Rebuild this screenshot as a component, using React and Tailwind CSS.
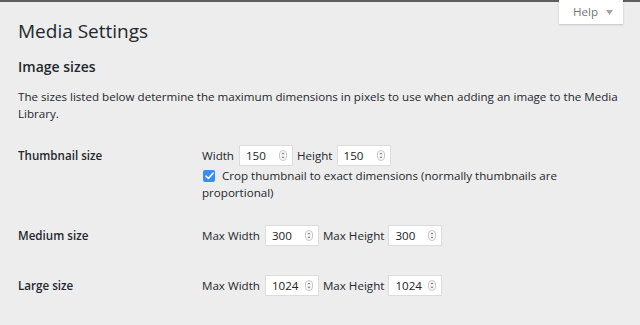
import React from "react";

function Spinner() {
  return (
    <svg width="8" height="11" viewBox="0 0 8 11" className="shrink-0">
      <rect x="0.5" y="0.5" width="7" height="10" rx="3.5" fill="#fafafa" stroke="#c8c8c8" />
      <path d="M2.4 4.3 L4 2.6 L5.6 4.3 Z" fill="#777" />
      <path d="M2.4 6.7 L4 8.4 L5.6 6.7 Z" fill="#777" />
    </svg>
  );
}

function NumInput({ value }) {
  return (
    <div className="w-[54px] h-[21px] bg-white border border-[#dcdcdc] flex items-center pl-[6px] pr-[5px] justify-between shrink-0">
      <span className="text-[11.6px] text-[#222]">{value}</span>
      <Spinner />
    </div>
  );
}

export default function App() {
  return (
    <div
      className="relative w-[640px] h-[325px] bg-[#ededed] overflow-hidden text-[#23282d]"
      style={{ fontFamily: '"Open Sans", "Noto Sans", sans-serif' }}
    >
      <div className="h-[2px] bg-[#5f5f5f]" />
      <div className="absolute top-0 left-[559px] w-[64px] h-[24px] bg-white shadow-[0_1px_2px_rgba(0,0,0,0.18)] flex items-center pl-[14px] gap-[8px]">
        <span className="text-[11.6px] text-[#72777c]">Help</span>
        <svg width="7" height="5" viewBox="0 0 7 5">
          <path d="M0 0 H7 L3.5 5 Z" fill="#a0a5aa" />
        </svg>
      </div>
      <div className="pl-[18px]">
        <h1 className="mt-[16px] text-[19px] leading-[26px] font-normal">Media Settings</h1>
        <h2 className="mt-[13px] text-[14px] leading-[20px] font-semibold">Image sizes</h2>
        <p className="mt-[11px] w-[618px] text-[11.6px] leading-[17px]">
          The sizes listed below determine the maximum dimensions in pixels to use when adding an image to the Media Library.
        </p>

        <div className="mt-[23px] flex">
          <div className="w-[184px] shrink-0 h-[21px] flex items-center text-[11.6px] font-semibold">Thumbnail size</div>
          <div className="flex-1 text-[11.6px]">
            <div className="flex items-center h-[21px]">
              <span className="mr-[5px]">Width</span>
              <NumInput value="150" />
              <span className="ml-[4px] mr-[4px]">Height</span>
              <NumInput value="150" />
            </div>
            <div className="mt-[1px] leading-[17px] relative pl-[20px]">
              <span className="absolute left-[1px] top-[3px] w-[12px] h-[12px] rounded-[2px] bg-[#3a8cf2] flex items-center justify-center">
                <svg width="9" height="8" viewBox="0 0 9 8">
                  <path d="M1 4.2 L3.4 6.5 L8 1.2" fill="none" stroke="white" strokeWidth="1.6" strokeLinecap="round" strokeLinejoin="round" />
                </svg>
              </span>
              <span>Crop thumbnail to exact dimensions (normally thumbnails are</span>
            </div>
            <div className="leading-[17px]">proportional)</div>
          </div>
        </div>

        <div className="mt-[24px] flex">
          <div className="w-[184px] shrink-0 h-[21px] flex items-center text-[11.6px] font-semibold">Medium size</div>
          <div className="flex items-center h-[21px] text-[11.6px]">
            <span className="mr-[5px]">Max Width</span>
            <NumInput value="300" />
            <span className="ml-[4px] mr-[4px]">Max Height</span>
            <NumInput value="300" />
          </div>
        </div>

        <div className="mt-[29px] flex">
          <div className="w-[184px] shrink-0 h-[21px] flex items-center text-[11.6px] font-semibold">Large size</div>
          <div className="flex items-center h-[21px] text-[11.6px]">
            <span className="mr-[5px]">Max Width</span>
            <NumInput value="1024" />
            <span className="ml-[4px] mr-[4px]">Max Height</span>
            <NumInput value="1024" />
          </div>
        </div>
      </div>
    </div>
  );
}
